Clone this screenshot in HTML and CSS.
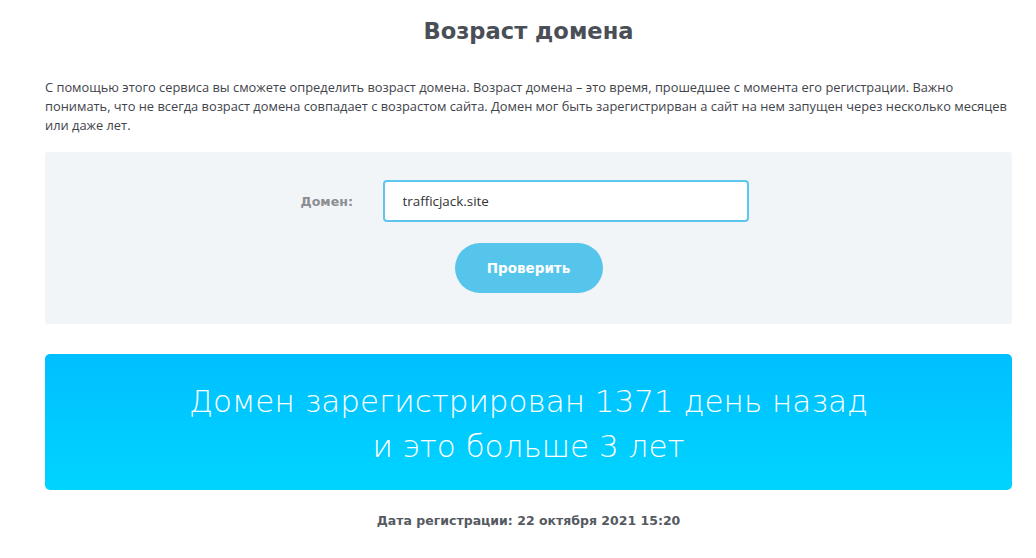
FILE: index.html
```html
<!DOCTYPE html>
<html lang="ru">
<head>
    <meta charset="UTF-8">
    <meta name="viewport" content="width=device-width, initial-scale=1.0">
    <link rel="stylesheet" href="styles.css">
</head>
<body>
    <div class="page">
        <h1 class="title">Возраст домена</h1>
        <p class="intro">С помощью этого сервиса вы сможете определить возраст домена. Возраст домена – это время, прошедшее с момента его регистрации. Важно понимать, что не всегда возраст домена совпадает с возрастом сайта. Домен мог быть зарегистрирван а сайт на нем запущен через несколько месяцев или даже лет.</p>
        <div class="form-box">
            <div class="row">
                <label class="label" for="domain">Домен:</label>
                <input type="text" id="domain" class="field" value="trafficjack.site">
            </div>
            <button class="check-btn">Проверить</button>
        </div>
        <div class="result">
            Домен зарегистрирован 1371 день назад<br>
            и это больше 3 лет
        </div>
        <div class="reg-date">Дата регистрации: 22 октября 2021 15:20</div>
    </div>
</body>
</html>
```

FILE: styles.css
```css
body {
    margin: 0;
    background: #ffffff;
    font-family: "DejaVu Sans", sans-serif;
    color: #4a4f57;
}
.page {
    margin: 0 24px 0 45px;
}
.title {
    margin: 0;
    padding-top: 15px;
    text-align: center;
    font-size: 22.6px;
    line-height: 32px;
    font-weight: bold;
    color: #4a4f57;
}
.intro {
    margin: 31px 0 0;
    font-family: "Open Sans", sans-serif;
    font-size: 12.85px;
    line-height: 19px;
    color: #3f444b;
}
.form-box {
    margin-top: 17px;
    background: #f2f5f7;
    border-radius: 3px;
    padding: 28px 0 31px;
    display: flex;
    flex-direction: column;
    align-items: center;
}
.row {
    display: flex;
    align-items: center;
    margin-right: 8px;
}
.label {
    font-size: 12.6px;
    font-weight: bold;
    color: #8a8d91;
    width: 82px;
}
.field {
    box-sizing: border-box;
    width: 366px;
    height: 42px;
    border: 2px solid #5cc6ee;
    border-radius: 4px;
    padding: 0 18px;
    font-family: "Open Sans", sans-serif;
    font-size: 13.4px;
    color: #333;
    outline: none;
}
.check-btn {
    margin-top: 21px;
    width: 148px;
    height: 50px;
    border: none;
    border-radius: 25px;
    background: #56c5ec;
    color: #fff;
    font-family: "DejaVu Sans", sans-serif;
    font-size: 13.5px;
    font-weight: bold;
    cursor: pointer;
}
.result {
    margin-top: 30px;
    height: 136px;
    box-sizing: border-box;
    padding-top: 25px;
    border-radius: 5px;
    background: linear-gradient(#00bfff, #00d4ff);
    color: #fff;
    text-align: center;
    font-family: "DejaVu Sans", sans-serif;
    font-weight: 200;
    font-size: 31px;
    line-height: 45px;
}
.reg-date {
    margin-top: 23px;
    text-align: center;
    font-size: 12.5px;
    font-weight: bold;
    color: #555a61;
}
```
